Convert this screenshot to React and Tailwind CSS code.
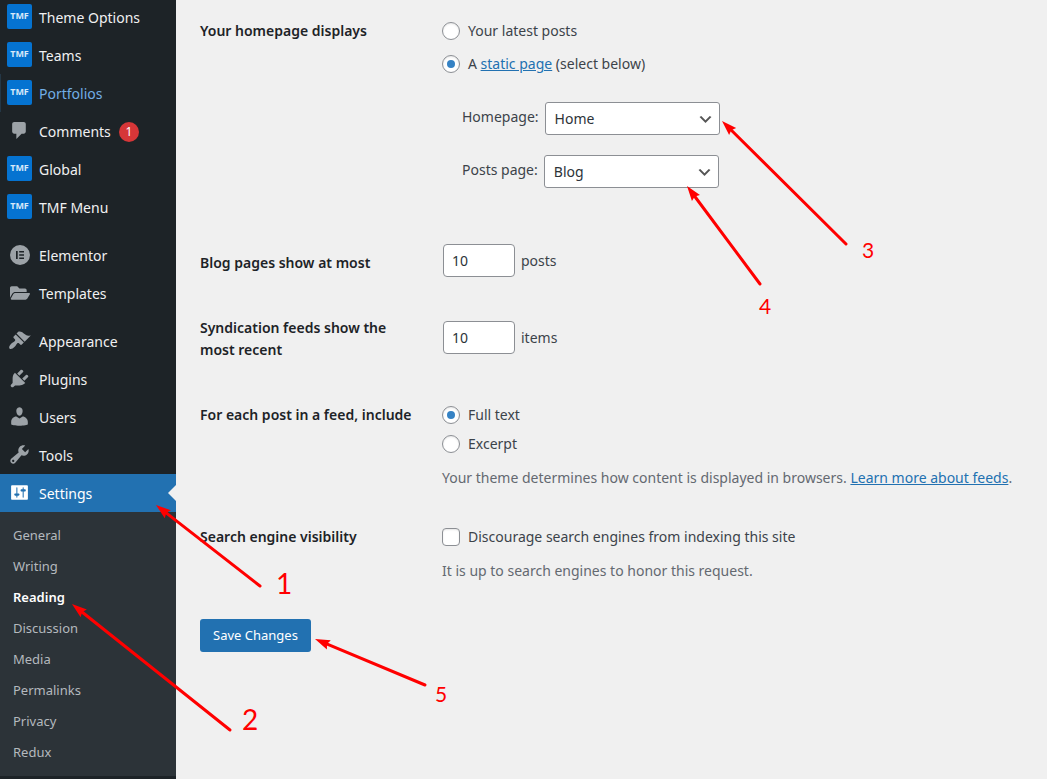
import { useState } from 'react';
import clsx from 'clsx';
import { FaFolderOpen } from 'react-icons/fa';

const ICON_PATHS = {
    comments: 'M5 2h9c1.1 0 2 .9 2 2v7c0 1.1-.9 2-2 2h-2l-5 5v-5H5c-1.1 0-2-.9-2-2V4c0-1.1.9-2 2-2z',
    appearance:
        'M14.48 11.06L7.41 3.99l1.5-1.5c.5-.56 2.3-.47 3.51.32 1.21.8 1.43 1.28 2.91 2.1 1.18.64 2.45 1.26 4.45.85zm-.71.71L6.7 4.7 4.93 6.47c-.39.39-.39 1.02 0 1.41l1.06 1.06c.39.39.39 1.03 0 1.42-.6.6-1.43 1.11-2.21 1.69-.35.26-.7.53-1.01.84C1.43 14.23.4 16.08 1.4 17.07c.99 1 2.84-.03 4.18-1.36.31-.31.58-.66.85-1.02.57-.78 1.08-1.61 1.69-2.21.39-.39 1.02-.39 1.41 0l1.06 1.06c.39.39 1.02.39 1.41 0z',
    plugins:
        'M13.11 4.36L9.87 7.6 8 5.73l3.24-3.24c.35-.34 1.05-.2 1.56.32.52.51.66 1.21.31 1.55zm-8 1.77l.91-1.12 9.01 9.01-1.19.84c-.71.71-2.63 1.16-3.82 1.16H6.14L4.9 17.26c-.59.59-1.54.59-2.12 0-.59-.58-.59-1.53 0-2.12l1.24-1.24v-3.88c0-1.13.4-3.19 1.09-3.89zm7.26 3.97l3.24-3.24c.34-.35 1.04-.21 1.55.31.52.51.66 1.21.31 1.55l-3.24 3.25z',
    users: 'M10 9.25c-2.27 0-2.73-3.44-2.73-3.44C7 4.02 7.82 2 9.97 2c2.16 0 2.98 2.02 2.71 3.81 0 0-.41 3.44-2.68 3.44zm0 2.57L12.72 10c2.39 0 4.52 2.33 4.52 4.53v2.49s-3.65 1.13-7.24 1.13c-3.65 0-7.24-1.13-7.24-1.13v-2.49c0-2.25 1.94-4.48 4.47-4.48z',
    tools: 'M16.68 9.77c-1.34 1.34-3.3 1.67-4.95.99l-5.41 6.52c-.99.99-2.59.99-3.58 0s-.99-2.59 0-3.57l6.52-5.42c-.68-1.65-.35-3.61.99-4.95 1.28-1.28 3.12-1.62 4.72-1.06l-2.89 2.89 2.82 2.82 2.86-2.87c.53 1.58.18 3.39-1.08 4.65zM3.81 16.21c.4.39 1.04.39 1.43 0 .4-.4.4-1.04 0-1.43-.39-.4-1.03-.4-1.43 0-.39.39-.39 1.03 0 1.43z',
    settings:
        'M18 16V4c0-.55-.45-1-1-1H3c-.55 0-1 .45-1 1v12c0 .55.45 1 1 1h14c.55 0 1-.45 1-1zM8 11h1c.55 0 1 .45 1 1s-.45 1-1 1H8v1.5c0 .28-.22.5-.5.5s-.5-.22-.5-.5V13H6c-.55 0-1-.45-1-1s.45-1 1-1h1V5.5c0-.28.22-.5.5-.5s.5.22.5.5V11zm5-2h-1c-.55 0-1-.45-1-1s.45-1 1-1h1V5.5c0-.28.22-.5.5-.5s.5.22.5.5V7h1c.55 0 1 .45 1 1s-.45 1-1 1h-1v5.5c0 .28-.22.5-.5.5s-.5-.22-.5-.5V9z',
    elementor:
        'M10 0a10 10 0 1 0 0 20a10 10 0 0 0 0-20zM6 6h1.7v8H6zM9.2 6H14v1.6H9.2zM9.2 9.2H14v1.6H9.2zM9.2 12.4H14V14H9.2z',
};

const ICON_SIZES = {
    comments: 'size-[21px]',
    settings: 'size-[21px]',
    elementor: 'size-5',
};

const MENU_GROUPS = [
    [
        { label: 'Theme Options', icon: 'tmf' },
        { label: 'Teams', icon: 'tmf' },
        { label: 'Portfolios', icon: 'tmf', hovered: true },
        { label: 'Comments', icon: 'comments', count: 1 },
        { label: 'Global', icon: 'tmf' },
        { label: 'TMF Menu', icon: 'tmf' },
    ],
    [
        { label: 'Elementor', icon: 'elementor' },
        { label: 'Templates', icon: 'folder' },
    ],
    [
        { label: 'Appearance', icon: 'appearance' },
        { label: 'Plugins', icon: 'plugins' },
        { label: 'Users', icon: 'users' },
        { label: 'Tools', icon: 'tools' },
        { label: 'Settings', icon: 'settings', current: true },
    ],
];

const SUBMENU = ['General', 'Writing', 'Reading', 'Discussion', 'Media', 'Permalinks', 'Privacy', 'Redux'];

// Tip, tail and number position of each step
const STEPS = [
    { n: 1, tip: [156, 505], tail: [260, 586], at: [276, 594], big: true },
    { n: 2, tip: [72, 604], tail: [230, 730], at: [242, 730], big: true },
    { n: 3, tip: [722, 121], tail: [846, 244], at: [862, 258] },
    { n: 4, tip: [687, 186], tail: [760, 284], at: [759, 314] },
    { n: 5, tip: [315, 639], tail: [425, 685], at: [435, 702] },
];

export default function App() {
    return (
        <div className="relative flex min-h-screen overflow-hidden bg-[#f0f0f0] font-['Noto_Sans','Open_Sans',sans-serif]">
            <Sidebar />
            <ReadingSettings />
            <StepArrows />
        </div>
    );
}

const Sidebar = () => (
    <nav className="w-44 shrink-0 bg-[#1d2327]">
        <div className="-mt-0.5 flex flex-col gap-2.5">
            {MENU_GROUPS.map((group, index) => (
                <ul key={index}>
                    {group.map((item) => (
                        <MenuItem key={item.label} {...item} />
                    ))}
                </ul>
            ))}
        </div>
        <ul className="bg-[#2c3338] py-2">
            {SUBMENU.map((label) => (
                <li key={label}>
                    <a
                        href="#"
                        className={clsx(
                            'flex h-[31px] items-center pl-[13px] text-[13px]',
                            label === 'Reading' ? 'font-semibold text-white' : 'text-[#b4b9be]'
                        )}
                    >
                        {label}
                    </a>
                </li>
            ))}
        </ul>
    </nav>
);

const MenuItem = ({ label, icon, count, hovered, current }) => (
    <li>
        <a
            href="#"
            className={clsx(
                'relative flex h-[38px] items-center pt-px text-sm',
                current && 'bg-[#2271b1] text-white',
                hovered && 'text-[#72aee6] shadow-[inset_1px_0_0_#243746]',
                !current && !hovered && 'text-[#f0f0f1]'
            )}
        >
            <span className="flex w-[39px] shrink-0 justify-center pb-0.5">
                <MenuIcon name={icon} current={current} />
            </span>
            {label}
            {count && (
                <span className="ml-2 flex size-5 items-center justify-center rounded-full bg-[#d63638] text-xs text-white">
                    {count}
                </span>
            )}
            {current && (
                <span className="absolute right-0 top-1/2 -translate-y-1/2 border-8 border-l-0 border-transparent border-r-[#f0f0f0]" />
            )}
        </a>
    </li>
);

const MenuIcon = ({ name, current }) => {
    if (name === 'tmf') {
        return (
            <span className="flex size-[25px] items-center justify-center rounded-xs bg-[#0573d1] text-[9px] font-bold text-[#d6e9f9]">
                TMF
            </span>
        );
    }
    if (name === 'folder') {
        return <FaFolderOpen className="size-5 text-[#9ca2a7]" />;
    }
    return (
        <svg
            viewBox="0 0 20 20"
            fillRule="evenodd"
            className={clsx('shrink-0 fill-current', ICON_SIZES[name] || 'size-[23px]', current ? 'text-white' : 'text-[#9ca2a7]')}
        >
            <path d={ICON_PATHS[name]} />
        </svg>
    );
};

const ReadingSettings = () => {
    const [front, setFront] = useState('page');
    const [feed, setFeed] = useState('full');

    return (
        <form className="min-w-0 flex-1 pl-6 pt-5 text-sm text-[#3c434a]">
            <Row title="Your homepage displays" className="min-h-56">
                <Radio name="front" checked={front === 'posts'} onChange={() => setFront('posts')}>
                    Your latest posts
                </Radio>
                <Radio name="front" checked={front === 'page'} onChange={() => setFront('page')} className="mt-[11px]">
                    A <Link>static page</Link> (select below)
                </Radio>
                <div className="mt-[27px] flex flex-col gap-5 pl-5">
                    <Select id="homepage" label="Homepage:" options={['Home', 'Blog']} value="Home" />
                    <Select id="posts-page" label="Posts page:" options={['Blog', 'Home']} value="Blog" />
                </div>
            </Row>

            <Row title="Blog pages show at most" htmlFor="posts-count" className="min-h-[77px]" titleClassName="pt-2">
                <NumberField id="posts-count" unit="posts" />
            </Row>

            <Row title="Syndication feeds show the most recent" htmlFor="feed-count" className="min-h-[83px]" titleClassName="-mt-1">
                <NumberField id="feed-count" unit="items" />
            </Row>

            <Row title="For each post in a feed, include" className="min-h-[122px]">
                <Radio name="feed" checked={feed === 'full'} onChange={() => setFeed('full')}>
                    Full text
                </Radio>
                <Radio name="feed" checked={feed === 'excerpt'} onChange={() => setFeed('excerpt')} className="mt-[7px]">
                    Excerpt
                </Radio>
                <p className="mt-3 text-[#646970]">
                    Your theme determines how content is displayed in browsers. <Link>Learn more about feeds</Link>.
                </p>
            </Row>

            <Row title="Search engine visibility">
                <label className="flex items-center gap-2 leading-[22px]">
                    <input
                        type="checkbox"
                        className="size-[18px] appearance-none rounded-sm border border-[#8c8f94] bg-white shadow-[inset_0_1px_2px_rgba(0,0,0,0.1)] checked:bg-[#3582c4]"
                    />
                    Discourage search engines from indexing this site
                </label>
                <p className="mt-3 text-[#646970]">It is up to search engines to honor this request.</p>
            </Row>

            <button type="button" className="mt-[37px] h-[33px] rounded-[3px] bg-[#2271b1] px-[13px] text-[13px] text-white">
                Save Changes
            </button>
        </form>
    );
};

/**
 * Settings row: title on the left, fields on the right
 */
const Row = ({ title, htmlFor, className, titleClassName, children }) => (
    <div className={clsx('flex leading-[22px]', className)}>
        <div className={clsx('w-[242px] shrink-0 pr-5 font-semibold text-[#1d2327]', titleClassName)}>
            {htmlFor ? <label htmlFor={htmlFor}>{title}</label> : title}
        </div>
        <div className="min-w-0 flex-1">{children}</div>
    </div>
);

const Radio = ({ name, checked, onChange, className, children }) => (
    <label className={clsx('flex items-center gap-2', className)}>
        <input
            type="radio"
            name={name}
            checked={checked}
            onChange={onChange}
            className="flex size-[18px] appearance-none items-center justify-center rounded-full border border-[#8c8f94] bg-white shadow-[inset_0_1px_2px_rgba(0,0,0,0.1)] checked:before:size-2 checked:before:rounded-full checked:before:bg-[#3582c4] checked:before:content-['']"
        />
        <span>{children}</span>
    </label>
);

const Select = ({ id, label, options, value }) => (
    <div className="flex items-start gap-1.5">
        <label htmlFor={id} className="pt-1">{label}</label>
        <span className="relative">
            <select
                id={id}
                defaultValue={value}
                className="block h-[33px] w-[175px] appearance-none rounded-[3px] border border-[#8c8f94] bg-white pl-[9px] pr-6 text-[#2c3338]"
            >
                {options.map((option) => (
                    <option key={option}>{option}</option>
                ))}
            </select>
            <svg viewBox="0 0 20 20" className="pointer-events-none absolute right-1.5 top-[9px] size-[17px] fill-[#555]">
                <path d="M5 6l5 5 5-5 2 1-7 7-7-7 2-1z" />
            </svg>
        </span>
    </div>
);

const NumberField = ({ id, unit }) => (
    <div className="flex items-center gap-1.5 pl-px">
        <input
            id={id}
            type="text"
            inputMode="numeric"
            defaultValue="10"
            className="h-[33px] w-[72px] rounded border border-[#8c8f94] bg-white px-2 text-[#2c3338]"
        />
        <label htmlFor={id}>{unit}</label>
    </div>
);

const Link = ({ children }) => (
    <a href="#" className="text-[#2271b1] underline">
        {children}
    </a>
);

const StepArrows = () => (
    <svg width="1047" height="779" className="pointer-events-none absolute left-0 top-0 fill-[#f00] font-['Lato',sans-serif]">
        <defs>
            <marker id="head" markerUnits="userSpaceOnUse" markerWidth="16" markerHeight="12" refX="0" refY="6" orient="auto">
                <path d="M0 6L15 1L13 6L15 11z" fill="#f00" />
            </marker>
        </defs>
        {STEPS.map(({ n, tip, tail, at, big }) => {
            const length = Math.hypot(tail[0] - tip[0], tail[1] - tip[1]);
            const startX = tip[0] + ((tail[0] - tip[0]) * 10) / length;
            const startY = tip[1] + ((tail[1] - tip[1]) * 10) / length;
            return (
                <g key={n}>
                    <path d={`M${startX} ${startY}L${tail[0]} ${tail[1]}`} stroke="#f00" strokeWidth="3" strokeLinecap="round" />
                    <path d={`M${tip[0]} ${tip[1]}L${tail[0]} ${tail[1]}`} markerStart="url(#head)" />
                    <text x={at[0]} y={at[1]} className={big ? 'text-[28px]' : 'text-[21px]'}>
                        {n}
                    </text>
                </g>
            );
        })}
    </svg>
);
